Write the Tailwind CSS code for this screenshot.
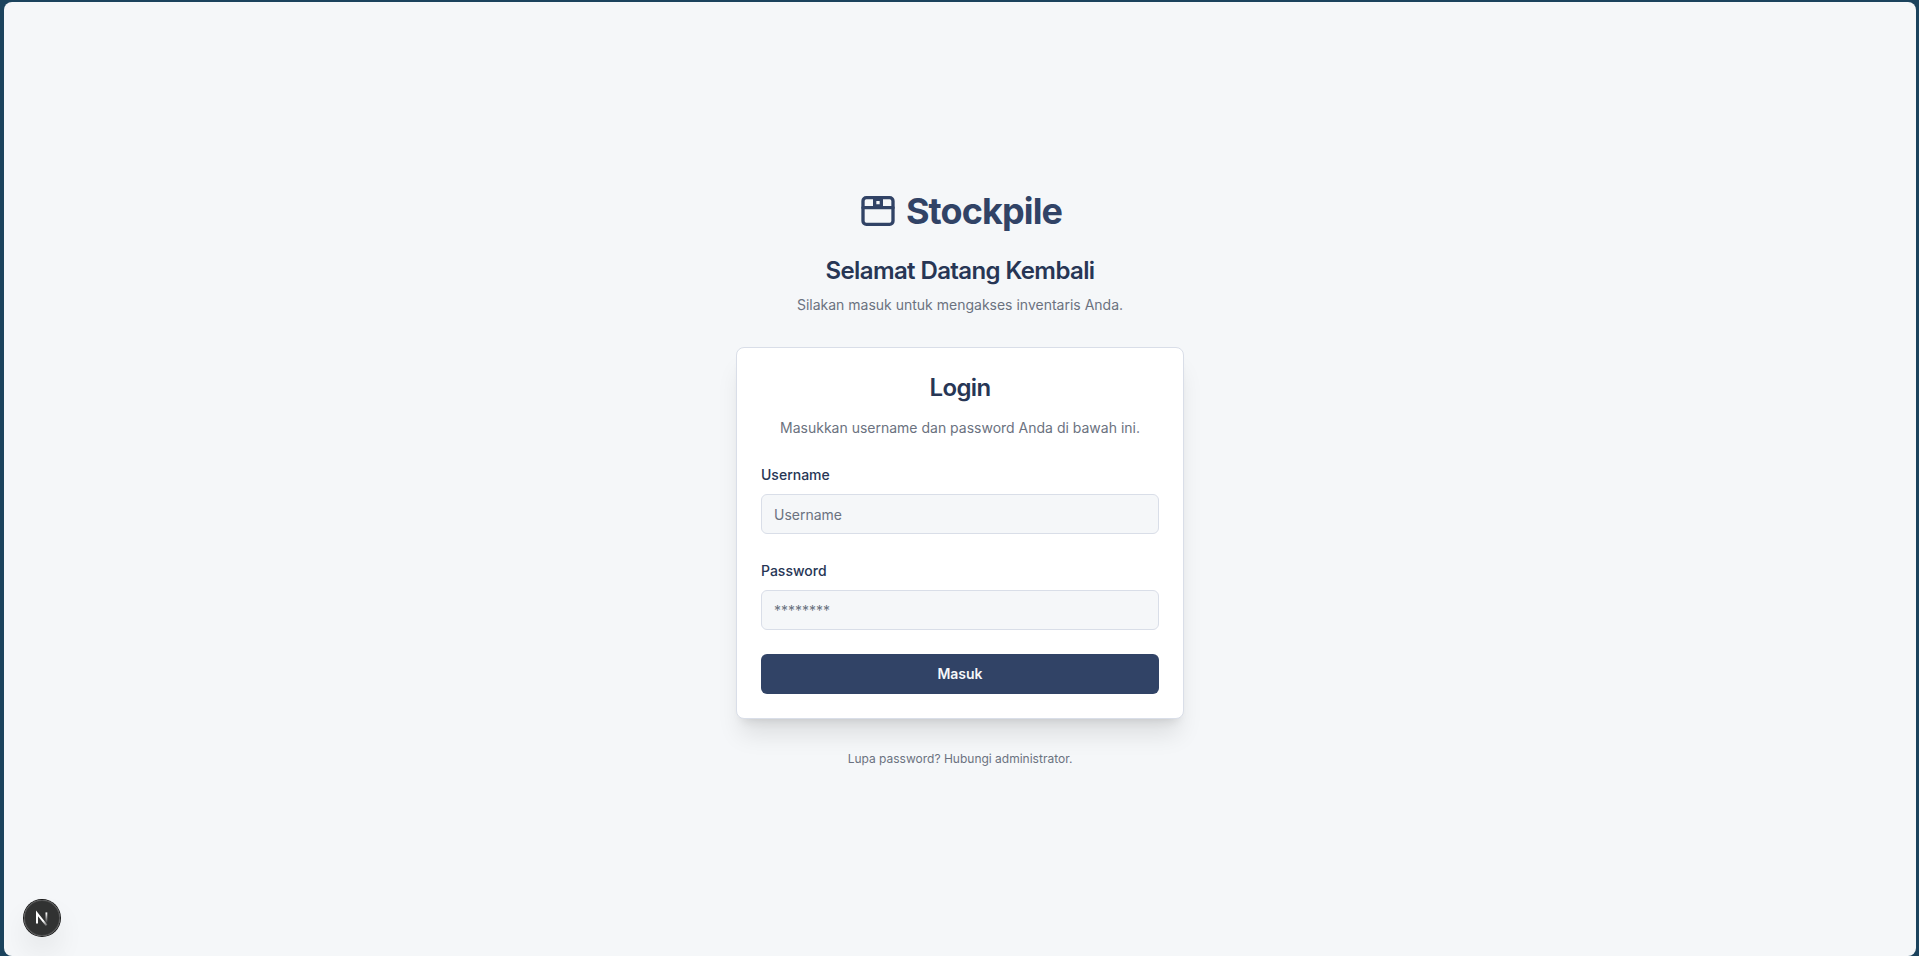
<!DOCTYPE html>
<html lang="id">
<head>
<meta charset="utf-8">
<meta name="viewport" content="width=device-width, initial-scale=1">
<title>Stockpile</title>
<script src="https://cdn.jsdelivr.net/npm/@tailwindcss/browser@4"></script>
</head>
<body class="flex min-h-screen flex-col bg-[#1b435d] pt-0.5 pr-[3px] pl-1 font-['Inter',sans-serif] text-[#273655]">
  <main class="flex grow flex-col items-center justify-center rounded-lg bg-[#f5f7f9]">
    <div class="w-full max-w-md">
      <header class="mb-8 text-center">
        <div class="mb-6 flex items-center justify-center gap-2 text-[#314366]">
          <svg class="size-10" viewBox="0 0 24 24" fill="none" stroke="currentColor" stroke-width="2" stroke-linecap="round" stroke-linejoin="round" aria-hidden="true">
            <rect x="3" y="4" width="18" height="16" rx="2"/>
            <path d="M3 10h18"/>
            <path d="M10 5h4v4h-4z"/>
          </svg>
          <span class="text-4xl font-bold tracking-tight">Stockpile</span>
        </div>
        <h1 class="text-2xl font-semibold tracking-tight">Selamat Datang Kembali</h1>
        <p class="mt-2 text-sm text-[#6b7280]">Silakan masuk untuk mengakses inventaris Anda.</p>
      </header>

      <section class="rounded-lg border border-[#d9dee8] bg-white p-6 shadow-xl">
        <h2 class="text-center text-2xl font-semibold tracking-tight">Login</h2>
        <p class="mt-3.5 text-center text-sm text-[#6b7280]">Masukkan username dan password Anda di bawah ini.</p>
        <form class="mt-6 flex flex-col gap-6">
          <div class="flex flex-col gap-2">
            <label for="username" class="pt-0.5 text-sm/[22px] font-medium">Username</label>
            <input id="username" type="text" placeholder="Username" class="h-10 w-full rounded-md border border-[#d9dee8] bg-[#f5f7f9] px-3 py-2 text-sm placeholder:text-[#6b7280]">
          </div>
          <div class="flex flex-col gap-2">
            <label for="password" class="pt-0.5 text-sm/[22px] font-medium">Password</label>
            <input id="password" type="password" placeholder="********" class="h-10 w-full rounded-md border border-[#d9dee8] bg-[#f5f7f9] px-3 py-2 text-sm placeholder:text-[#6b7280]">
          </div>
          <button type="submit" class="h-10 w-full rounded-md bg-[#314366] text-sm font-semibold text-[#f5f7f9]">Masuk</button>
        </form>
      </section>

      <p class="mt-8 text-center text-xs text-[#6b7280]">Lupa password? Hubungi administrator.</p>
    </div>
  </main>

  <button type="button" aria-label="Next.js" class="fixed bottom-5 left-6 flex size-9 items-center justify-center rounded-full bg-black/80 shadow-[0_0_0_1px_#171717,inset_0_0_0_1px_rgba(255,255,255,0.14),0_16px_32px_-8px_rgba(0,0,0,0.24)]">
    <svg class="size-9" viewBox="0 0 36 36" fill="none" aria-hidden="true">
      <defs>
        <linearGradient id="diagonal" x1="20" y1="20" x2="25" y2="26" gradientUnits="userSpaceOnUse">
          <stop stop-color="#fff"/>
          <stop offset="1" stop-color="#fff" stop-opacity="0"/>
        </linearGradient>
        <linearGradient id="stem" x1="22" y1="13" x2="22" y2="23" gradientUnits="userSpaceOnUse">
          <stop stop-color="#fff"/>
          <stop offset="1" stop-color="#fff" stop-opacity="0"/>
        </linearGradient>
      </defs>
      <path d="M13 23.6V13.4L22.6 25.4" stroke="url(#diagonal)" stroke-width="2"/>
      <path d="M22.4 12.4v11" stroke="url(#stem)" stroke-width="1.8"/>
    </svg>
  </button>
</body>
</html>
